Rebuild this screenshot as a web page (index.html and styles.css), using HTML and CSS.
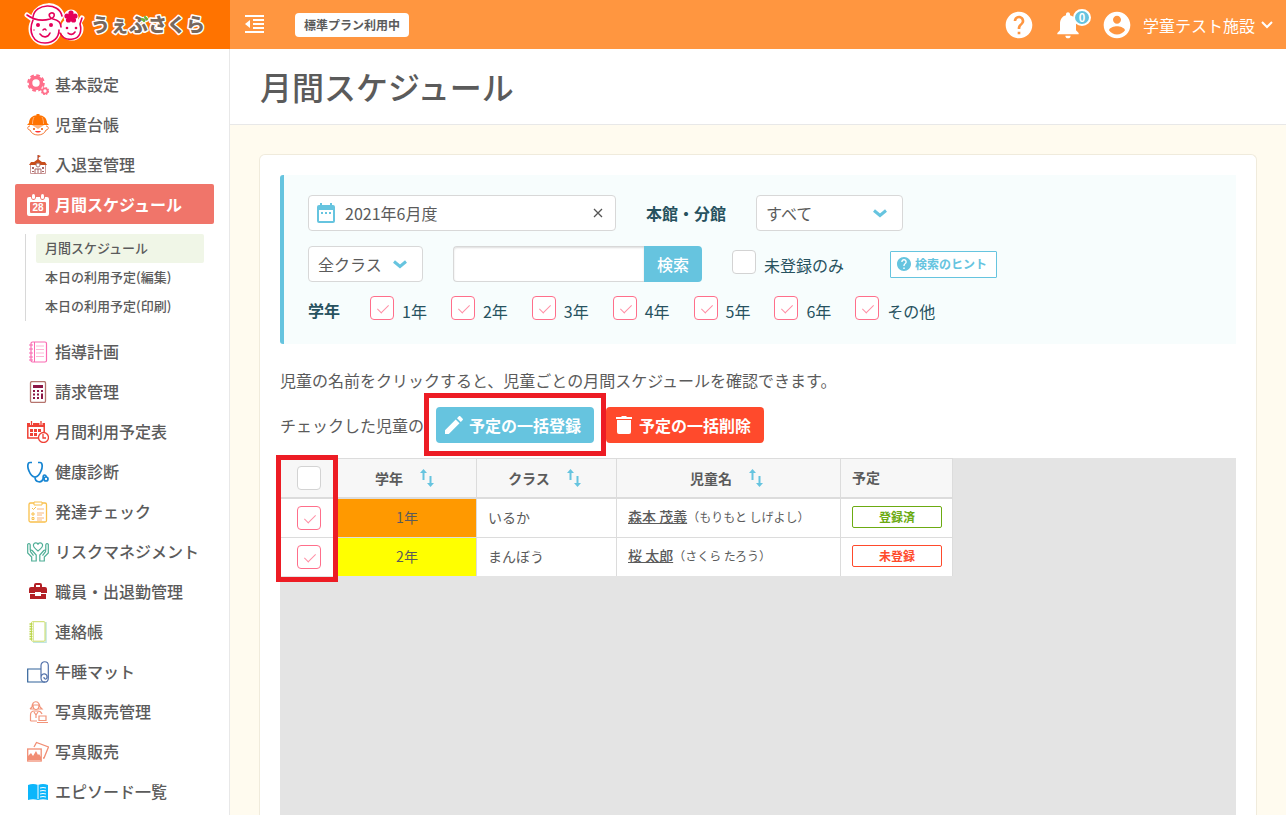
FILE: index.html
```html
<!DOCTYPE html>
<html lang="ja">
<head>
<meta charset="utf-8">
<title>月間スケジュール</title>
<meta name="viewport" content="width=device-width, initial-scale=1">
<link rel="stylesheet" href="styles.css">
</head>
<body>
<header class="topbar">
  <a class="brand" href="#" aria-label="うぇぶさくら">
    <svg width="190" height="46" viewBox="0 0 190 46">
      <g stroke="#fff" stroke-width="5" fill="#fff" stroke-linejoin="round" stroke-linecap="round">
        <circle cx="22" cy="27" r="14"/><circle cx="49" cy="27" r="9"/><circle cx="48" cy="15" r="5"/>
        <path d="M4 13l8 6M11 13c5-12 24-13 28 0l-5 8zM56 21l3-5"/>
      </g>
      <g fill="none" stroke="#e5005a" stroke-width="1.600" stroke-linecap="round" stroke-linejoin="round">
        <path d="M4 13c7 5 16 6 23 4 6-2 5-7 1-6-3 1-2 5 2 6 5 1 8 3 8 8"/>
        <path d="M10 15C12 1 36 0 39 14M10 18C5 30 10 41 22 41c9 0 14-6 14-13"/>
        <path d="M37 31c3 6 8 7 13 6 7-1 9-8 7-15l2-6M45 31c2 2 5 2 7-1M17 32c3 4 8 4 10-1M20 28q2-2 3 0"/>
      </g>
      <g fill="#e5005a"><circle cx="15" cy="23" r="2"/><circle cx="28" cy="23" r="2"/><circle cx="44" cy="26" r="1.300"/><circle cx="53" cy="26" r="1.300"/><circle cx="11" cy="28" r=".7"/>
        <circle cx="48" cy="11" r="2.600"/><circle cx="52" cy="14" r="2.600"/><circle cx="50.500" cy="18" r="2.600"/><circle cx="45.500" cy="18" r="2.600"/><circle cx="44" cy="14" r="2.600"/><circle cx="48" cy="15" r="3"/></g>
      <text class="brand-text" x="68" y="30">うぇぶさくら</text>
      <path d="M119 17l2 2M122 15l2 2" stroke="#6cbb2d" stroke-width="2.200" stroke-linecap="round"/>
    </svg>
  </a>
  <div class="topbar-main">
    <button class="icon-button" aria-label="メニューを閉じる">
      <svg width="19" height="19" viewBox="0 0 19 19" fill="#fff"><path d="M0 0h19v2H0zM8 4h11v2H8zM8 8h11v2H8zM8 12h11v2H8zM0 16h19v2H0zM5 5v8L0 9z"/></svg>
    </button>
    <span class="plan">標準プラン利用中</span>
    <div class="tools">
      <button class="icon-button" aria-label="ヘルプ">
        <svg width="32" height="32" viewBox="0 0 24 24" fill="#fff"><path d="M12 2C6.480 2 2 6.480 2 12s4.480 10 10 10 10-4.480 10-10S17.520 2 12 2zm1 17h-2v-2h2v2zm2.070-7.750l-.9.920C13.450 12.900 13 13.500 13 15h-2v-.5c0-1.100.450-2.100 1.170-2.830l1.240-1.260c.370-.360.590-.860.590-1.410 0-1.100-.9-2-2-2s-2 .9-2 2H8c0-2.210 1.790-4 4-4s4 1.790 4 4c0 .880-.360 1.680-.930 2.250z"/></svg>
      </button>
      <button class="icon-button bell" aria-label="お知らせ">
        <svg width="32" height="32" viewBox="0 0 24 24" fill="#fff"><path d="M12 22c1.100 0 2-.9 2-2h-4c0 1.100.890 2 2 2zm6-6v-5c0-3.070-1.640-5.640-4.500-6.320V4c0-.830-.670-1.500-1.500-1.500s-1.500.670-1.500 1.500v.680C7.630 5.360 6 7.920 6 11v5l-2 2v1h16v-1l-2-2z"/></svg>
        <span class="count">0</span>
      </button>
      <button class="account">
        <svg width="32" height="32" viewBox="0 0 24 24" fill="#fff"><path d="M12 2C6.480 2 2 6.480 2 12s4.480 10 10 10 10-4.480 10-10S17.520 2 12 2zm0 3c1.660 0 3 1.340 3 3s-1.340 3-3 3-3-1.340-3-3 1.340-3 3-3zm0 14.200c-2.500 0-4.710-1.280-6-3.220.030-1.990 4-3.080 6-3.080 1.990 0 5.970 1.090 6 3.080-1.290 1.940-3.500 3.220-6 3.220z"/></svg>
        <span>学童テスト施設</span>
        <svg width="12" height="8" viewBox="0 0 12 8" fill="none" stroke="#fff" stroke-width="2"><path d="M1 1l5 5 5-5"/></svg>
      </button>
    </div>
  </div>
</header>

<div class="page">
  <nav class="sidebar">
    <a class="item" href="#"><svg class="ico" viewBox="0 0 22 22" fill="none" stroke="#ff6f8b"><circle cx="9" cy="9" r="5.500" stroke-width="3.600"/><circle cx="9" cy="9" r="7.800" stroke-width="2" stroke-dasharray="3.700 2.430"/><circle cx="18" cy="17" r="2.500" stroke-width="1.700"/><circle cx="18" cy="17" r="3.500" stroke-width="1.200" stroke-dasharray="1.700 1.050"/></svg>基本設定</a>
    <a class="item" href="#"><svg class="ico" viewBox="0 0 22 22"><path d="M2 9C2 4 6 1.500 9.500 1.300V0h3v1.300C16 1.500 20 4 20 9l2 2H0z" fill="#ff7300"/><path d="M7 3c-1 2-1.500 4-1.500 7M15 3c1 2 1.500 4 1.500 7" stroke="#ffb27a" fill="none"/><path d="M3 12c-3 0-3 4 0 4 1 3 4 5 8 5s7-2 8-5c3 0 3-4 0-4" fill="none" stroke="#f47c3a"/><path d="M5 11l6 4 6-4z" fill="#ffb27a"/><circle cx="7" cy="15" r="1" fill="#e55500"/><circle cx="15" cy="15" r="1" fill="#e55500"/><path d="M8 17h6c-1 2-5 2-6 0z" fill="#f33"/></svg>児童台帳</a>
    <a class="item" href="#"><svg class="ico" viewBox="0 0 22 22"><path d="M11 1v6" stroke="#933"/><path d="M11 1l3 1-3 2z" fill="#c84e1c"/><path d="M7 8l4-3 4 3h3l2 3H2l2-3z" fill="#c84e1c"/><path d="M3.500 11v8.500h15V11" fill="none" stroke="#c99"/><circle cx="11" cy="11" r="2" fill="#fff" stroke="#a77"/><path d="M8 19.500V15h6v4.500M11 15v4" fill="none" stroke="#a66"/><path d="M5 13h2v2H5zM15 13h2v2h-2zM5 17h2v1H5zM15 17h2v1h-2z" fill="#a66"/></svg>入退室管理</a>
    <a class="item active" href="#"><svg class="ico" viewBox="0 0 22 22"><path d="M2 3h2c0 4 5 4 5 0h4c0 4 5 4 5 0h2q2 0 2 2v15q0 2-2 2H2q-2 0-2-2V5q0-2 2-2z" fill="#fff"/><rect x="5" y="0" width="3" height="5" rx="1.500" fill="#fff"/><rect x="14" y="0" width="3" height="5" rx="1.500" fill="#fff"/><rect x="3" y="8" width="16" height="11" rx="1" fill="#f0756a"/><text class="ico-date" x="11" y="17">28</text></svg>月間スケジュール</a>
    <div class="submenu">
      <a class="current" href="#">月間スケジュール</a>
      <a href="#">本日の利用予定(編集)</a>
      <a href="#">本日の利用予定(印刷)</a>
    </div>
    <a class="item" href="#"><svg class="ico" viewBox="0 0 22 22" fill="none" stroke="#fa6bb2"><rect x="4" y="1" width="15.500" height="20" rx="1.500" stroke-width="1.200"/><path d="M7.500 1v20M2 4h4M2 8h4M2 12h4M2 16h4M2 19h4"/><path d="M9 5h8M9 8.500h8M9 12h8M9 15.500h8" stroke="#ffb5d6"/></svg>指導計画</a>
    <a class="item" href="#"><svg class="ico" viewBox="0 0 22 22"><rect x="3.500" y=".5" width="15" height="21" rx="1.500" fill="#fff" stroke="#b5746e" stroke-width="1.300"/><path d="M6 4h10v3H6zM6 9h2v2H6zM10 9h2v2h-2zM14 9h2v2h-2zM6 12.500h2v2H6zM10 12.500h2v2h-2zM14 12.500h2V18h-2zM6 16h2v2H6zM10 16h2v2h-2z" fill="#8c1746"/></svg>請求管理</a>
    <a class="item" href="#"><svg class="ico" viewBox="0 0 22 22"><path d="M0 2h18v4H0z" fill="#ef4136"/><path d="M.8 5v12h11M17.200 5v6" fill="none" stroke="#ef4136" stroke-width="1.500"/><path d="M4.500 0v4M14 0v4" stroke="#fff" stroke-width="3"/><path d="M4.500 0v4M14 0v4" stroke="#ef4136" stroke-width="1.300"/><path d="M3 8h3v3H3zM7 8h3v3H7zM11 8h3v3h-3zM3 12h3v3H3zM7 12h3v3H7z" fill="#ef4136"/><circle cx="16.500" cy="16.500" r="5" fill="#fff" stroke="#ef4136" stroke-width="1.300"/><path d="M16 13v4h3" fill="none" stroke="#ef4136" stroke-width="1.300"/></svg>月間利用予定表</a>
    <a class="item" href="#"><svg class="ico" viewBox="0 0 22 22" fill="none" stroke="#1785d2" stroke-width="1.700"><path d="M5 1.500H3C0 1.500.5 7 2 10c2 5 4 6 6 6s4-1 6-6c1.500-3 2-8.500-1-8.500h-2M8 16c0 6 7 6 8 2 .5-2-.5-4 1.500-4S19 16 19 16"/><circle cx="19" cy="18" r="2"/></svg>健康診断</a>
    <a class="item" href="#"><svg class="ico" viewBox="0 0 22 22" fill="none" stroke="#f9c04c"><rect x="2" y="2" width="17.500" height="19" rx="1.500" stroke-width="1.300"/><path d="M7 1h8v3H7z" fill="#fff"/><path d="M5 7l1.500 1.500L9 6M5 12h2v2H5zM5 16.500h2v2H5z"/><path d="M10 8h7M10 12h7M10 14h5M10 17h7M10 19h5" stroke="#f9b87c"/></svg>発達チェック</a>
    <a class="item" href="#"><svg class="ico" viewBox="0 0 22 22" fill="none" stroke="#4fae96" stroke-width="1.200"><path d="M11 10C7 7 6 5 6.500 3.500c1-2.500 4-2 4.500 0 .5-2 3.500-2.500 4.500 0C16 5 15 7 11 10z"/><path d="M.7 3v9l4 4v4h4.500v-6l-4-4.500c-1-1-2.500 0-1.700 1.200l3 4M.7 3c1.500-1 2.500 0 2.500 1v5M21.300 3v9l-4 4v4h-4.500v-6l4-4.500c1-1 2.500 0 1.700 1.200l-3 4M21.300 3c-1.500-1-2.500 0-2.500 1v5"/></svg>リスクマネジメント</a>
    <a class="item" href="#"><svg class="ico" viewBox="0 0 22 22" fill="#b32025"><path d="M7 6V4q0-2 2-2h4q2 0 2 2v2h3q2 0 2 2v4h-6v-1H8v1H2V8q0-2 2-2zm2 0h4V4H9zM3 13h5v2h6v-2h5v5H3z"/></svg>職員・出退勤管理</a>
    <a class="item" href="#"><svg class="ico" viewBox="0 0 22 22" fill="none"><path d="M6 21.500h13V1" stroke="#bfe5e0" stroke-width="1.500"/><rect x="4.500" y=".7" width="13.500" height="19.500" rx="1" stroke="#cbdc62"/><path d="M6.500 1v19" stroke="#dce99c"/><path d="M2.500 3h3M2.500 5.500h3M2.500 8h3M2.500 10.500h3M2.500 13h3M2.500 15.500h3M2.500 18h3" stroke="#b9d54b" stroke-width="1.300"/></svg>連絡帳</a>
    <a class="item" href="#"><svg class="ico" viewBox="0 0 22 22" fill="none" stroke="#31639a" stroke-width="1.200"><path d="M14 8H.7v13H18"/><path d="M14 17V4.500c0-5 7.300-5 7.300 0V17c0 5.500-7.300 5.500-7.300 0 0-5 6-5.500 6-1 0 3-3.500 2.500-3 0" stroke="#5371aa"/></svg>午睡マット</a>
    <a class="item" href="#"><svg class="ico" viewBox="0 0 22 22" fill="none" stroke="#f2947a" stroke-width="1.200"><path d="M3 8l2-2C5-1 12-1 13 6l2 2h-4M3 8h4M6 4h6M6 4c0 6 6 6 6 0zM3.500 20v-6c0-3 2-4 4-4h3c3 0 4 1.500 4.500 3M3.500 20H10M7 11l2 3 2-3M9 14v3"/><path d="M12 15h7v4.500h-7zM10 21.500h11"/></svg>写真販売管理</a>
    <a class="item" href="#"><svg class="ico" viewBox="0 0 22 22" fill="none" stroke="#f18e74" stroke-width="1.300"><path d="M7 6l2.500-4.500L21.500 6l-4.500 11h-1"/><rect x=".7" y="8" width="13.500" height="12"/><path d="M1 19v-4l3-3 2 3 3-5 2 4 1-1 2 3v3z" fill="#f18e74" stroke="none"/></svg>写真販売</a>
    <a class="item" href="#"><svg class="ico" viewBox="0 0 22 22"><path d="M1 4q5-2 10 0 5-2 10 0v15q-5-1.500-10 0-5-1.500-10 0z" fill="#0cb6fb"/><path d="M11 4v14M13 7q3-1 6 0M13 10q3-1 6 0M13 13q3-1 6 0M13 16q3-1 6 0" fill="none" stroke="#fff"/></svg>エピソード一覧</a>
  </nav>

  <main class="main">
    <div class="title"><h1>月間スケジュール</h1></div>
    <section class="card">
      <form class="search">
        <div class="row">
          <div class="date">
            <svg width="18" height="20" viewBox="0 0 18 20"><path d="M2 2h1V0h2v2h8V0h2v2h1q2 0 2 2v14q0 2-2 2H2q-2 0-2-2V4q0-2 2-2z" fill="#66c4df"/><path d="M2 7h14v11H2z" fill="#fff"/><path d="M4 9h2v2H4zM8 9h2v2H8zM12 9h2v2h-2z" fill="#66c4df"/></svg>
            <input type="text" value="2021年6月度" aria-label="対象月">
            <button type="button" class="clear" aria-label="クリア"><svg width="10" height="10" viewBox="0 0 10 10" stroke="#555" stroke-width="1.300"><path d="M1 1l8 8M9 1L1 9"/></svg></button>
          </div>
          <label class="building-label" for="building">本館・分館</label>
          <span class="select wide"><select id="building"><option>すべて</option></select><svg width="14" height="9" viewBox="0 0 14 9" fill="none" stroke="#66c4df" stroke-width="3"><path d="M1 1.500l6 5 6-5"/></svg></span>
        </div>
        <div class="row second">
          <span class="select"><select aria-label="クラス"><option>全クラス</option></select><svg width="14" height="9" viewBox="0 0 14 9" fill="none" stroke="#66c4df" stroke-width="3"><path d="M1 1.500l6 5 6-5"/></svg></span>
          <div class="keyword"><input type="text" aria-label="キーワード"><button type="button">検索</button></div>
          <label class="check unregistered"><input type="checkbox"><span>未登録のみ</span></label>
          <button type="button" class="hint"><svg width="14" height="14" viewBox="2 2 20 20" fill="#66c4df"><path d="M12 2C6.480 2 2 6.480 2 12s4.480 10 10 10 10-4.480 10-10S17.520 2 12 2zm1 17h-2v-2h2v2zm2.070-7.750l-.9.920C13.450 12.900 13 13.500 13 15h-2v-.5c0-1.100.450-2.100 1.170-2.830l1.240-1.260c.370-.360.590-.860.590-1.410 0-1.100-.9-2-2-2s-2 .9-2 2H8c0-2.210 1.790-4 4-4s4 1.790 4 4c0 .880-.360 1.680-.930 2.250z"/></svg>検索のヒント</button>
        </div>
        <div class="row grades" role="group" aria-labelledby="grade-label">
          <strong id="grade-label">学年</strong>
          <label class="check"><input type="checkbox" checked><span>1年</span></label>
          <label class="check"><input type="checkbox" checked><span>2年</span></label>
          <label class="check"><input type="checkbox" checked><span>3年</span></label>
          <label class="check"><input type="checkbox" checked><span>4年</span></label>
          <label class="check"><input type="checkbox" checked><span>5年</span></label>
          <label class="check"><input type="checkbox" checked><span>6年</span></label>
          <label class="check"><input type="checkbox" checked><span>その他</span></label>
        </div>
      </form>

      <p class="lead">児童の名前をクリックすると、児童ごとの月間スケジュールを確認できます。</p>
      <div class="actions">
        <span>チェックした児童の</span>
        <div class="highlighted action-mark">
          <button class="action register"><svg width="20" height="20" viewBox="0 0 20 20" fill="#fff"><path d="M1 15.200V19h3.800L15.500 8.300l-3.800-3.800zM18.700 5.100c.4-.4.4-1 0-1.400l-2.400-2.400c-.4-.4-1-.4-1.400 0L13 3.200 16.800 7z"/></svg>予定の一括登録</button>
        </div>
        <button class="action delete"><svg width="20" height="20" viewBox="0 0 20 20" fill="#fff"><path d="M3 5h14v12q0 2-2 2H5q-2 0-2-2zM2 2h5l1-1h4l1 1h5v2H2z"/></svg>予定の一括削除</button>
      </div>

      <div class="sheet highlighted row-mark">
        <table>
          <colgroup><col class="c-check"><col class="c-grade"><col class="c-class"><col class="c-name"><col class="c-plan"></colgroup>
          <thead>
            <tr>
              <th class="pick"><input type="checkbox" aria-label="すべて選択"></th>
              <th><span class="sort">学年<svg width="16" height="18" viewBox="0 0 16 18" fill="#66c4df"><path d="M3.500 0L7 4H4.500v7h-2V4H0zM9.500 7h2v7H14l-3.500 4L7 14h2.500z"/></svg></span></th>
              <th><span class="sort">クラス<svg width="16" height="18" viewBox="0 0 16 18" fill="#66c4df"><path d="M3.500 0L7 4H4.500v7h-2V4H0zM9.500 7h2v7H14l-3.500 4L7 14h2.500z"/></svg></span></th>
              <th><span class="sort">児童名<svg width="16" height="18" viewBox="0 0 16 18" fill="#66c4df"><path d="M3.500 0L7 4H4.500v7h-2V4H0zM9.500 7h2v7H14l-3.500 4L7 14h2.500z"/></svg></span></th>
              <th class="left">予定</th>
            </tr>
          </thead>
          <tbody>
            <tr>
              <td class="pick"><input type="checkbox" checked aria-label="森本 茂義"></td>
              <td class="center grade-1">1年</td>
              <td>いるか</td>
              <td><a href="#">森本 茂義</a><small>（もりもと しげよし）</small></td>
              <td><span class="badge done">登録済</span></td>
            </tr>
            <tr>
              <td class="pick"><input type="checkbox" checked aria-label="桜 太郎"></td>
              <td class="center grade-2">2年</td>
              <td>まんぼう</td>
              <td><a href="#">桜 太郎</a><small>（さくら たろう）</small></td>
              <td><span class="badge todo">未登録</span></td>
            </tr>
          </tbody>
        </table>
      </div>
    </section>
  </main>
</div>
</body>
</html>
```
FILE: styles.css
```css
*, *::after { box-sizing: border-box; }

body {
  margin: 0;
  min-height: 100vh;
  display: flex;
  flex-direction: column;
  font-family: "Noto Sans CJK JP", sans-serif;
  font-size: 16px;
  line-height: 24px;
  color: #5b5b5b;
  background: #fff;
}

a { color: inherit; text-decoration: none; }
button, input, select { font: inherit; color: inherit; margin: 0; }
button { padding: 0; border: 0; background: none; cursor: pointer; white-space: nowrap; }
svg { flex: none; display: block; }

/* Top bar */
.topbar { display: flex; height: 49px; background: #ff9640; color: #fff; }
.brand { width: 230px; padding-left: 23px; background: #ff7300; display: flex; align-items: center; }
.brand-text {
  font-size: 19px;
  font-weight: 900;
  fill: #77685e;
  stroke: #fff;
  stroke-width: 3px;
  stroke-linejoin: round;
  paint-order: stroke;
}
.topbar-main { flex: 1; display: flex; align-items: center; padding: 0 13px 0 15px; }
.icon-button { display: flex; position: relative; }
.plan {
  margin-left: 31px;
  padding: 0 9px;
  border-radius: 4px;
  background: #fff;
  color: #5b5b5b;
  font-size: 12px;
  font-weight: 700;
}
.tools { margin-left: auto; display: flex; align-items: center; gap: 17px; }
.count {
  position: absolute;
  top: 0;
  right: -7px;
  width: 18px;
  height: 17px;
  border: 2px solid #fff;
  border-radius: 50%;
  background: #66c4df;
  font-size: 11px;
  font-weight: 700;
  line-height: 13px;
  text-align: center;
}
.account { display: flex; align-items: center; gap: 6px; }
.account span { margin-left: 4px; }

/* Side menu */
.page { flex: 1; display: flex; }
.sidebar { width: 230px; padding: 15px 15px 0; border-right: 1px solid #e8e8e8; flex: none; }
.item {
  display: flex;
  align-items: center;
  gap: 6px;
  height: 40px;
  padding: 0 12px;
  border-radius: 2px;
  font-weight: 500;
}
.ico { width: 22px; height: 22px; margin-top: 2px; }
.ico-date { font: 700 10px "Liberation Sans", sans-serif; fill: #fff; text-anchor: middle; }
.active { background: #f0756a; color: #fff; font-weight: 700; }
.submenu {
  margin: 10px 10px;
  padding-left: 10px;
  border-left: 1px solid #d8d8d8;
  font-size: 13px;
  font-weight: 500;
}
.submenu a { display: block; height: 29px; padding: 0 9px; line-height: 27px; border-radius: 2px; }
.submenu .current { background: #f0f6e7; }

/* Main column */
.main { flex: 1; min-width: 0; display: flex; flex-direction: column; background: #fffbef; }
.title { height: 76px; padding: 13px 30px; border-bottom: 1px solid #e8e8e8; background: #fff; }
.title h1 { margin: 0; font-size: 32px; line-height: 48px; font-weight: 500; }
.card {
  flex: 1;
  display: flex;
  flex-direction: column;
  margin: 29px 29px 0;
  padding: 20px 20px 0;
  border: 1px solid #f0ebdc;
  border-bottom: 0;
  border-radius: 6px 6px 0 0;
  background: #fff;
}

/* Search panel */
.search {
  padding: 20px 24px 21px;
  border-left: 4px solid #66c4df;
  border-radius: 3px 0 0 3px;
  background: #f7fdfd;
  color: #27525f;
}
.row { display: flex; align-items: center; }
.second { margin-top: 15px; }
.date {
  display: flex;
  align-items: center;
  gap: 10px;
  width: 308px;
  height: 36px;
  padding: 0 12px 0 8px;
  border: 1px solid #d8d8d8;
  border-radius: 4px;
  background: #fff;
  color: #5b5b5b;
}
.date input { flex: 1; min-width: 0; padding: 0; border: 0; background: none; }
.building-label { margin: 0 30px; font-weight: 700; }
.select { position: relative; width: 115px; }
.select.wide { width: 147px; }
.select select {
  appearance: none;
  width: 100%;
  height: 36px;
  padding: 0 9px;
  border: 1px solid #d8d8d8;
  border-radius: 4px;
  background: #fff;
  color: #5b5b5b;
}
.select svg { position: absolute; right: 16px; top: 14px; pointer-events: none; }
.keyword { display: flex; width: 249px; margin: 0 30px; }
.keyword input {
  flex: 1;
  min-width: 0;
  height: 36px;
  border: 1px solid #d8d8d8;
  border-right: 0;
  border-radius: 4px 0 0 4px;
  background: #fff;
  box-shadow: inset 0 1px 2px #ddd;
}
.keyword button { width: 58px; border-radius: 0 4px 4px 0; background: #66c4df; color: #fff; font-weight: 500; }

input[type="checkbox"] {
  appearance: none;
  flex: none;
  display: block;
  width: 24px;
  height: 24px;
  border: 1px solid #d3d3d3;
  border-radius: 4px;
  background: #fff;
}
input[type="checkbox"]:checked { border-color: #ff6f8b; }
input[type="checkbox"]:checked::after {
  content: "";
  display: block;
  width: 6px;
  height: 11px;
  margin: 5px 0 0 9px;
  border: solid #ff8fa5;
  border-width: 0 1px 1px 0;
  transform: rotate(45deg);
}
.check { display: flex; gap: 8px; }
.check span { padding-top: 3px; }
.unregistered { width: 158px; padding-bottom: 2px; }
.hint {
  display: flex;
  align-items: center;
  gap: 4px;
  height: 27px;
  padding: 0 9px 0 6px;
  border: 1px solid #66c4df;
  border-radius: 1px;
  background: #fff;
  color: #66c4df;
  font-size: 12px;
  font-weight: 700;
}
.grades { margin-top: 14px; gap: 24px; }
.grades strong { margin-right: 6px; }

/* Bulk actions */
.lead { margin: 24px 0 15px; }
.actions { display: flex; align-items: center; gap: 12px; }
.action {
  display: flex;
  align-items: center;
  gap: 5px;
  height: 36px;
  padding: 0 13px 0 8px;
  border-radius: 4px;
  color: #fff;
  font-weight: 700;
}
.register { background: #66c4df; }
.delete { background: #ff4a2c; }

/* Red frames that call out a control */
.highlighted { position: relative; }
.highlighted::after { content: ""; position: absolute; border: 5px solid #ed1c24; pointer-events: none; z-index: 1; }
.action-mark::after { inset: -14px -12px -13px; }
.row-mark::after { left: -4px; top: -3px; width: 62px; height: 127px; }

/* Children table */
.sheet { flex: 1; margin-top: 15px; background: #e4e4e4; }
table { table-layout: fixed; width: 673px; border-spacing: 0; font-size: 14px; line-height: 20px; }
.c-check { width: 57px; }
.c-grade, .c-class { width: 140px; }
.c-name { width: 224px; }
.c-plan { width: 112px; }
th, td { padding: 0 10px 0 11px; border-right: 1px solid #dcdcdc; border-bottom: 1px solid #dcdcdc; background: #fff; }
th { height: 41px; border-top: 1px solid #dcdcdc; border-bottom-width: 2px; background: #f7f7f7; }
td { height: 39px; padding-bottom: 3px; }
tbody tr:last-child td { height: 38px; border-bottom: 0; }
.pick { padding: 0 15px 0 17px; }
.left { text-align: left; padding-bottom: 3px; }
.sort { display: flex; justify-content: center; align-items: center; gap: 17px; padding-right: 3px; }
.center { text-align: center; }
.grade-1 { background: #ff9900; }
.grade-2 { background: #ffff00; }
td a { text-decoration: underline; font-weight: 500; }
td small { font-size: 12px; }
.badge {
  display: block;
  width: 90px;
  border: 1px solid currentColor;
  border-radius: 2px;
  font-size: 12px;
  font-weight: 700;
  text-align: center;
}
.done { color: #6cab12; }
.todo { color: #ff4a2c; }
```
